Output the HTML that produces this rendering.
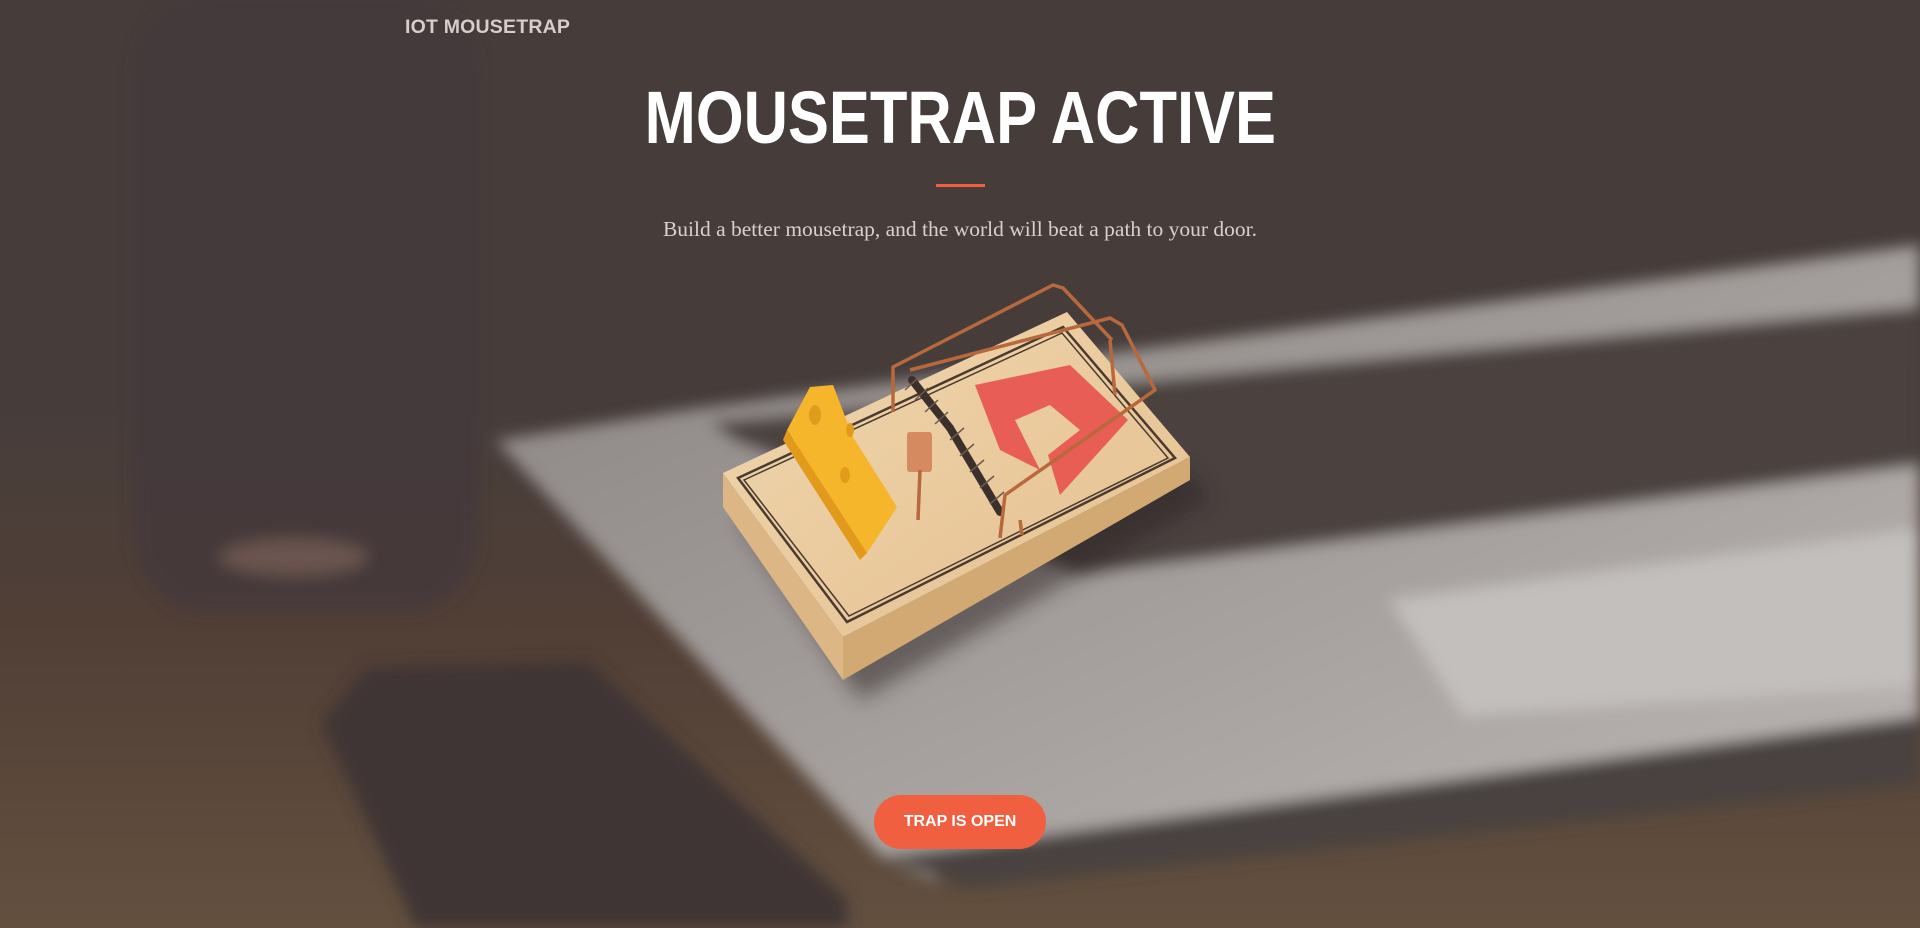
<!DOCTYPE html>
<html><head><meta charset="utf-8"><style>
html,body{margin:0;padding:0;width:1920px;height:928px;overflow:hidden;background:#463d3b;font-family:"Liberation Sans",sans-serif}
svg{position:absolute;left:0;top:0}
.nav{position:absolute;left:405px;top:16px;font-weight:bold;font-size:19.5px;color:#d6ceca;letter-spacing:0.2px}
.title{position:absolute;left:0;width:1920px;top:76px;text-align:center;color:#fff;font-weight:bold;font-size:74px;line-height:84px}
.title span{display:inline-block;transform:scaleX(0.83)}
.line{position:absolute;left:936px;top:184px;width:49px;height:3px;background:#f05f40}
.sub{position:absolute;left:0;width:1920px;top:217px;text-align:center;color:#d9d0ca;font-family:"Liberation Serif",serif;font-size:21.5px}
.btn{position:absolute;left:874px;top:795px;width:172px;height:54px;border-radius:27px;background:#f05f40;color:#fff;font-weight:bold;font-size:16px;line-height:54px;text-align:center}
</style></head><body>
<svg width="1920" height="928" viewBox="0 0 1568 758" preserveAspectRatio="none">
<defs>
<linearGradient id="wood" x1="0" y1="0" x2="0" y2="1"><stop offset="0" stop-color="#463d3b"/><stop offset="0.45" stop-color="#523f36"/><stop offset="1" stop-color="#63503f"/></linearGradient>
<linearGradient id="lap" x1="0" y1="0" x2="1" y2="1"><stop offset="0" stop-color="#8a8482"/><stop offset="1" stop-color="#bdb8b5"/></linearGradient>
<filter id="bl"><feGaussianBlur stdDeviation="6"/></filter>
</defs>
<rect width="1568" height="758" fill="#463d3b"/>
<rect y="330" width="1568" height="428" fill="url(#wood)"/>
<g filter="url(#bl)">
<rect x="110" y="0" width="280" height="500" rx="60" fill="#42383a" opacity="0.7"/>
<ellipse cx="240" cy="455" rx="60" ry="15" fill="#6a5550"/>
<polygon points="405,360 560,335 1568,200 1568,600 760,718 720,700" fill="url(#lap)"/>
<polygon points="720,700 1568,585 1568,640 790,725" fill="#4a423f"/>
<polygon points="580,345 1568,250 1568,380 880,470 600,360" fill="#4b4341"/>
<polygon points="1135,490 1568,432 1568,560 1195,585" fill="#c3bfbd"/>
<polygon points="262,590 300,545 480,540 692,735 692,758 340,758" fill="#3f3634"/>
</g>
</svg>
<svg width="1920" height="928" viewBox="0 0 1920 928">
<defs>
<linearGradient id="top" x1="0" y1="0" x2="1" y2="1"><stop offset="0" stop-color="#f0d6ae"/><stop offset="1" stop-color="#e4c08f"/></linearGradient>
<filter id="sh"><feGaussianBlur stdDeviation="10"/></filter>
</defs>
<polygon points="740,520 1190,470 1210,500 860,700" fill="#2a2220" opacity="0.5" filter="url(#sh)"/>
<polygon points="723,473 843,637 843,680 723,507" fill="#dcb684"/>
<polygon points="843,637 1190,457 1190,480 843,680" fill="#d2a873"/>
<polygon points="723,473 1067,312 1190,457 843,637" fill="url(#top)"/>
<polygon points="738,478 1063,327 1175,458 847,622" fill="none" stroke="#4a3a30" stroke-width="2.5"/>
<polygon points="744,480 1062,333 1168,458 849,616" fill="none" stroke="#4a3a30" stroke-width="1.5"/>
<polygon points="975,385 1070,365 1128,420 1060,495 1048,455 1080,430 1050,405 1015,420 1040,470 1000,450" fill="#e8514d" opacity="0.9"/>
<polygon points="787,430 810,387 833,385 853,437 897,507 867,553" fill="#f6b62b"/>
<polygon points="787,430 867,553 860,560 783,440" fill="#e19a1a"/>
<ellipse cx="815" cy="415" rx="6" ry="10" fill="#e29c1c"/><ellipse cx="845" cy="475" rx="5" ry="8" fill="#e29c1c"/><ellipse cx="850" cy="430" rx="4" ry="7" fill="#e29c1c"/>
<g stroke="#3b302b" stroke-width="8" stroke-linecap="round">
<line x1="912" y1="380" x2="950" y2="428"/><line x1="950" y1="428" x2="1000" y2="512"/>
</g>
<g stroke="#6a5a50" stroke-width="1.5">
<line x1="905" y1="390" x2="918" y2="378"/><line x1="915" y1="400" x2="928" y2="388"/><line x1="925" y1="412" x2="938" y2="400"/><line x1="935" y1="424" x2="948" y2="412"/><line x1="950" y1="440" x2="964" y2="428"/><line x1="960" y1="456" x2="974" y2="444"/><line x1="970" y1="472" x2="984" y2="460"/><line x1="980" y1="488" x2="994" y2="476"/><line x1="990" y1="504" x2="1004" y2="492"/>
</g>
<rect x="907" y="432" width="25" height="40" rx="3" fill="#d68a5f"/>
<g fill="none" stroke="#b8683d" stroke-width="3.5" stroke-linejoin="round">
<polyline points="893,412 893,367 1053,285 1063,288 1112,340"/>
<polyline points="910,370 1110,318 1122,325 1155,390 1005,495 1000,538"/>
<line x1="1110" y1="340" x2="1115" y2="395"/>
<line x1="1020" y1="520" x2="1022" y2="535"/>
<line x1="920" y1="470" x2="918" y2="520"/>
</g>
</svg>
<div class="nav">IOT MOUSETRAP</div>
<div class="title"><span>MOUSETRAP ACTIVE</span></div>
<div class="line"></div>
<div class="sub">Build a better mousetrap, and the world will beat a path to your door.</div>
<div class="btn">TRAP IS OPEN</div>
</body></html>
